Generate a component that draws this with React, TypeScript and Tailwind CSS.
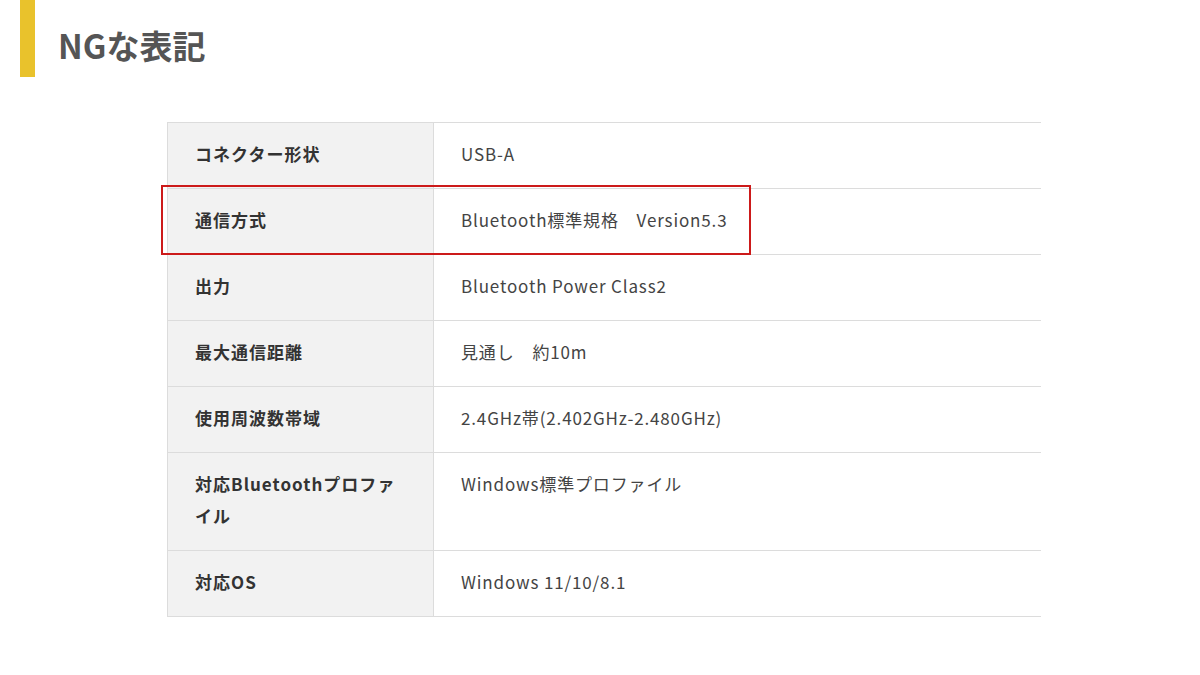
import React from 'react'

const ROWS: [string, string][] = [
  ['コネクター形状', 'USB-A'],
  ['通信方式', 'Bluetooth標準規格　Version5.3'],
  ['出力', 'Bluetooth Power Class2'],
  ['最大通信距離', '見通し　約10m'],
  ['使用周波数帯域', '2.4GHz帯(2.402GHz-2.480GHz)'],
  ['対応Bluetoothプロファイル', 'Windows標準プロファイル'],
  ['対応OS', 'Windows 11/10/8.1'],
]

const font = { fontFamily: '"Noto Sans CJK JP", "Noto Sans", sans-serif' }

export default function App() {
  return (
    <div className="w-[1200px] h-[675px] bg-white overflow-hidden" style={font}>
      <div className="flex items-start">
        <div className="ml-[20px] w-[15px] h-[77px] bg-[#e9c22c]" />
        <h1 className="ml-[23px] mt-[24px] text-[33px] leading-[42px] font-bold text-[#555555]">NGな表記</h1>
      </div>

      <div className="relative ml-[167px] mt-[45px] w-[874px]">
        <table className="w-full border-collapse">
          <tbody>
            {ROWS.map(([label, value]) => (
              <tr key={label} className="border-t border-b border-[#dcdcdc]">
                <th className="w-[266px] bg-[#f2f2f2] border-l border-r border-[#dcdcdc] text-left align-top pl-[27px] pr-[30px] pt-[15px] pb-[18px] text-[17px] leading-[32px] font-bold text-[#333333] tracking-[0.06em]">
                  {label}
                </th>
                <td className="align-top pl-[27px] pt-[15px] pb-[18px] text-[17px] leading-[32px] text-[#444444] tracking-[0.05em]">
                  {value}
                </td>
              </tr>
            ))}
          </tbody>
        </table>
        <div className="absolute left-[-6px] top-[63px] w-[590px] h-[70px] border-2 border-[#cc1a1a]" />
      </div>
    </div>
  )
}
